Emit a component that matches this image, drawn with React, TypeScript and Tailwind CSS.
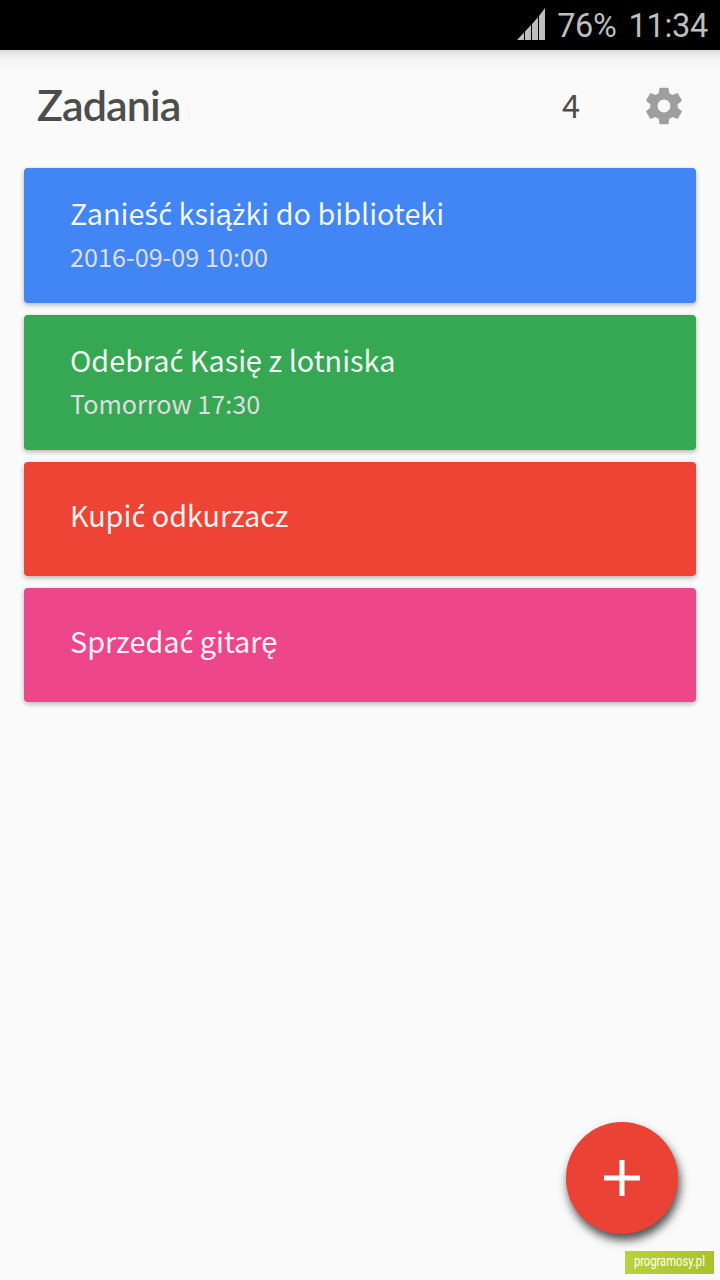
type Task = {
    title: string;
    date?: string;
    color: string;
};

const tasks: Task[] = [
    { title: 'Zanieść książki do biblioteki', date: '2016-09-09 10:00', color: 'bg-[#4285f4]' },
    { title: 'Odebrać Kasię z lotniska', date: 'Tomorrow 17:30', color: 'bg-[#36a854]' },
    { title: 'Kupić odkurzacz', color: 'bg-[#ee4436]' },
    { title: 'Sprzedać gitarę', color: 'bg-[#ee468b]' },
];

const StatusBar = () => {
    return (
        <div className="flex h-[50px] items-center justify-end bg-black pr-[12px] font-['Roboto',sans-serif] text-[32.5px] leading-none text-[#bebebe]">
            <svg className="mr-[11px] -mt-[2px]" width="29" height="32" viewBox="0 0 29 32" fill="currentColor">
                <path d="M0 32L7 24.5V32zM8 23.5L14 17V32H8zM15 16L21 9.3V32H15zM22 8L28 0V32H22z" />
            </svg>
            <span className="mt-[3px] tracking-[-0.3px]">76%</span>
            <span className="mt-[3px] ml-[12px] tracking-[-0.3px]">11:34</span>
        </div>
    )
}

const Header = () => {
    return (
        <header className="flex h-[118px] items-center bg-[linear-gradient(#dcdcdc,#f3f3f3_8px,#fafafa_20px)] pr-[34px] pl-[37px] text-[#4d4d4d]">
            <h1 className="-mt-[9px] flex-1 font-['Lato',sans-serif] text-[43px] leading-none font-semibold tracking-[-0.9px]">Zadania</h1>
            <span className="-mt-[9px] mr-[62px] font-['Noto_Sans_CJK_SC',sans-serif] text-[32.5px] leading-none">4</span>
            <button className="-mt-[6px]" aria-label="Ustawienia">
                <svg width="44" height="44" viewBox="0 0 24 24" fill="#9e9e9e">
                    <path d="M19.43 12.98c.04-.32.07-.64.07-.98s-.03-.66-.07-.98l2.11-1.65c.19-.15.24-.42.12-.64l-2-3.46c-.12-.22-.39-.3-.61-.22l-2.49 1c-.52-.4-1.08-.73-1.69-.98l-.38-2.65C14.46 2.18 14.25 2 14 2h-4c-.25 0-.46.18-.49.42l-.38 2.65c-.61.25-1.17.59-1.69.98l-2.49-1c-.23-.09-.49 0-.61.22l-2 3.46c-.13.22-.07.49.12.64l2.11 1.65c-.04.32-.07.65-.07.98s.03.66.07.98l-2.11 1.65c-.19.15-.24.42-.12.64l2 3.46c.12.22.39.3.61.22l2.49-1c.52.4 1.08.73 1.69.98l.38 2.65c.03.24.24.42.49.42h4c.25 0 .46-.18.49-.42l.38-2.65c.61-.25 1.17-.59 1.69-.98l2.49 1c.23.09.49 0 .61-.22l2-3.46c.12-.22.07-.49-.12-.64l-2.11-1.65zM12 15.5c-1.93 0-3.5-1.57-3.5-3.5s1.57-3.5 3.5-3.5 3.5 1.57 3.5 3.5-1.57 3.5-3.5 3.5z" />
                </svg>
            </button>
        </header>
    )
}

// Noto Sans CJK has no ready-made ś, ć and ż, so they come from Noto Sans
const PolishText = ({ text }: { text: string }) => {
    return (
        <>
            {text.split(/([śćż])/).map((part, i) => (
                i % 2 ? <span key={i} className="font-['Noto_Sans',sans-serif] leading-none">{part}</span> : part
            ))}
        </>
    )
}

const TaskCard = ({ title, date, color }: Task) => {
    return (
        <li className={`${color} ${date ? 'h-[135px] pt-[23px]' : 'h-[114px] pt-[31px]'} rounded-[4px] pl-[46px] shadow-[0_2px_5px_rgba(0,0,0,0.28)]`}>
            <p className="h-[43px] text-[28.8px] leading-[44px] text-white/95"><PolishText text={title} /></p>
            {date && <p className="text-[25.2px] leading-[44px] text-[#dedede]">{date}</p>}
        </li>
    )
}

const App = () => {
    return (
        <div className="relative flex h-[1280px] w-[720px] flex-col overflow-hidden bg-[#fafafa]">
            <StatusBar />
            <Header />
            <ul className="flex flex-col gap-3 px-6 font-['Noto_Sans_CJK_SC',sans-serif]">
                {tasks.map(task => <TaskCard key={task.title} {...task} />)}
            </ul>
            <button className="absolute right-[42px] bottom-[46px] flex size-[112px] items-center justify-center rounded-full bg-[#ea4335] shadow-[2px_6px_10px_rgba(0,0,0,0.7)]" aria-label="Dodaj">
                <svg width="36" height="36" viewBox="0 0 36 36" fill="white">
                    <path d="M15.5 0h5v15.5H36v5H20.5V36h-5V20.5H0v-5h15.5z" />
                </svg>
            </button>
            <div className="absolute right-[6px] bottom-[6px] flex h-[23px] w-[89px] items-center justify-center bg-linear-to-r from-[#b9d23c] to-[#a9c22c] font-['Roboto',sans-serif] text-[14px] text-white">
                <span className="-mt-[2px] scale-x-[0.8] whitespace-nowrap">programosy.pl</span>
            </div>
        </div>
    )
}

export default App;
